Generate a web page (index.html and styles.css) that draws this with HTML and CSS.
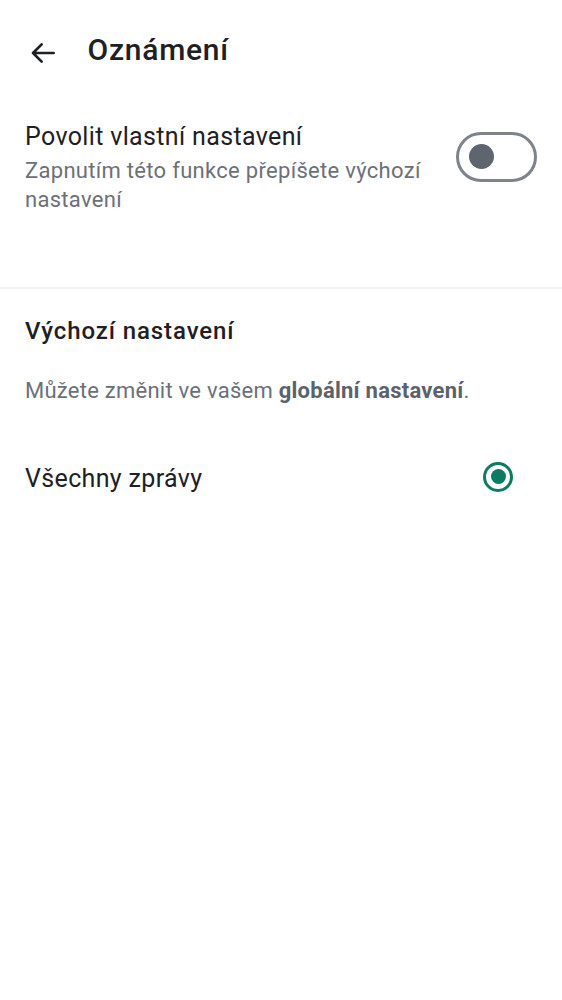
FILE: index.html
```html
<!DOCTYPE html>
<html lang="cs">
<head>
<meta charset="utf-8">
<link rel="stylesheet" href="styles.css">
</head>
<body>
<div class="app">
  <header class="topbar">
    <span class="back">
      <svg width="32" height="32" viewBox="0 0 24 24" fill="none" stroke="#1f2024" stroke-width="2" stroke-linecap="round" stroke-linejoin="round"><path d="M20 12H4.5M11 5.5L4.5 12l6.5 6.5"/></svg>
    </span>
    <h1 class="title">Oznámení</h1>
  </header>

  <section class="row-toggle">
    <div class="row-text">
      <div class="row-title">Povolit vlastní nastavení</div>
      <div class="row-sub">Zapnutím této funkce přepíšete výchozí nastavení</div>
    </div>
    <span class="switch"><span class="knob"></span></span>
  </section>

  <hr class="divider">

  <section class="defaults">
    <h2 class="section-title">Výchozí nastavení</h2>
    <p class="note">Můžete změnit ve vašem <strong>globální nastavení</strong>.</p>
    <div class="radio-row">
      <span class="radio-label">Všechny zprávy</span>
      <span class="radio"><span class="dot"></span></span>
    </div>
  </section>
</div>
</body>
</html>
```
FILE: styles.css
```css
html, body {
  margin: 0;
  padding: 0;
  background: #ffffff;
}
body {
  font-family: Roboto, "Noto Sans", sans-serif;
  color: #1f2024;
}
.app {
  width: 562px;
}
.topbar {
  display: flex;
  align-items: flex-start;
  padding: 30px 0 0 27px;
  height: 70px;
  box-sizing: border-box;
}
.back {
  display: flex;
  width: 32px;
  height: 32px;
  margin-top: 6.5px;
  margin-right: 28.5px;
}
.title {
  margin: 0;
  font-size: 30px;
  line-height: 40px;
  font-weight: 500;
  letter-spacing: 0.75px;
  color: #1f2024;
}
.row-toggle {
  display: flex;
  align-items: flex-start;
  justify-content: space-between;
  padding: 50.5px 25px 0 25px;
  height: 216.5px;
  box-sizing: border-box;
}
.row-text {
  width: 420px;
}
.row-title {
  font-size: 25px;
  line-height: 32px;
  letter-spacing: 0.35px;
  color: #1f2024;
}
.row-sub {
  margin-top: 3.8px;
  font-size: 22px;
  line-height: 29px;
  letter-spacing: 0.3px;
  color: #6b7079;
}
.switch {
  display: flex;
  align-items: center;
  flex-shrink: 0;
  width: 81px;
  height: 50px;
  box-sizing: border-box;
  border: 3px solid #7d838b;
  border-radius: 25px;
  padding-left: 9.5px;
  margin-top: 11.2px;
}
.knob {
  width: 25px;
  height: 25px;
  border-radius: 50%;
  background: #5f656e;
}
.divider {
  margin: 0;
  border: 0;
  height: 2px;
  background: #f1f1f5;
}
.defaults {
  padding: 0 25px;
}
.section-title {
  margin: 27.6px 0 0;
  font-size: 24px;
  line-height: 30px;
  font-weight: 500;
  letter-spacing: 0.9px;
  color: #1f2024;
}
.note {
  margin: 29.7px 0 0;
  font-size: 22px;
  line-height: 30px;
  letter-spacing: 0.25px;
  color: #6b7079;
}
.note strong {
  font-weight: 700;
  color: #5c626b;
}
.radio-row {
  display: flex;
  align-items: flex-start;
  justify-content: space-between;
  margin-top: 55.9px;
  padding-right: 24px;
}
.radio-label {
  margin-top: 2px;
  font-size: 25px;
  line-height: 30px;
  letter-spacing: 0.35px;
  color: #1f2024;
}
.radio {
  display: flex;
  align-items: center;
  justify-content: center;
  width: 30px;
  height: 30px;
  box-sizing: border-box;
  border: 3px solid #0b7b63;
  border-radius: 50%;
}
.dot {
  width: 15px;
  height: 15px;
  border-radius: 50%;
  background: #0b7b63;
}
```
